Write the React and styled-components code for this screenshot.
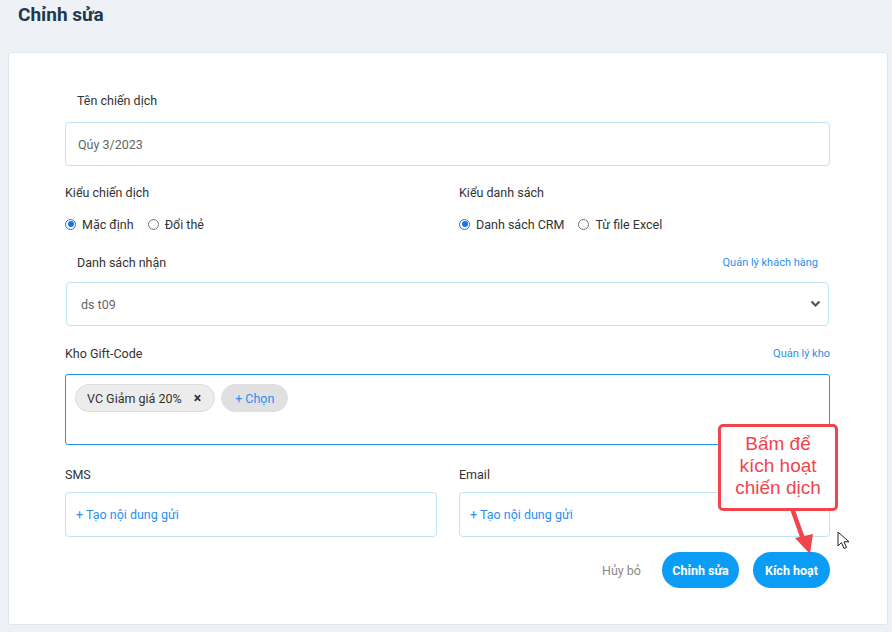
import React from "react";
import styled, { createGlobalStyle } from "styled-components";

const Global = createGlobalStyle`
  html, body { margin: 0; padding: 0; background: #eef2f6; }
  body { font-family: Roboto, "Noto Sans", Arial, sans-serif; color: #333; }
  * { box-sizing: border-box; }
`;

const Page = styled.div`
  padding: 0 4px 7px 8px;
  width: 892px;
`;

const Title = styled.h1`
  margin: 0;
  padding-left: 10px;
  height: 30px;
  line-height: 30px;
  font-size: 19px;
  font-weight: 700;
  color: #22384d;
`;

const Card = styled.div`
  position: relative;
  margin-top: 22px;
  background: #fff;
  border: 1px solid #e1e6ea;
  border-radius: 3px;
  padding: 40px 57px 35px 56px;
  height: 573px;
`;

const Label = styled.div`
  font-size: 12.5px;
  line-height: 16px;
  color: #333;
  padding-left: ${(p) => (p.$indent ? "12px" : "0")};
  margin-top: ${(p) => p.$mt || 0}px;
  margin-bottom: ${(p) => p.$mb || 0}px;
`;

const LabelRow = styled.div`
  display: flex;
  justify-content: space-between;
  align-items: center;
  margin-top: ${(p) => p.$mt || 0}px;
  margin-bottom: ${(p) => p.$mb || 0}px;
  padding-right: ${(p) => p.$pr || 0}px;
`;

const Link = styled.a`
  font-size: 11px;
  line-height: 16px;
  color: #2b8ff0;
  text-decoration: none;
`;

const Input = styled.div`
  height: 44px;
  border: 1px solid #bfe3fc;
  border-radius: 4px;
  display: flex;
  align-items: center;
  padding-left: 12px;
  font-size: 12.5px;
  color: #666;
`;

const Select = styled(Input)`
  margin: 0 1px;
  padding: 0 7px 0 14px;
  justify-content: space-between;
`;

const Columns = styled.div`
  display: grid;
  grid-template-columns: 372px 371px;
  column-gap: 22px;
  margin-top: ${(p) => p.$mt || 0}px;
`;

const RadioRow = styled.div`
  display: flex;
  align-items: center;
  gap: 14px;
  margin-top: 15px;
  height: 16px;
`;

const RadioItem = styled.label`
  display: flex;
  align-items: center;
  gap: 6px;
  font-size: 12.5px;
  color: #333;
`;

const RadioDot = styled.span`
  width: 11px;
  height: 11px;
  border-radius: 50%;
  border: ${(p) => (p.$on ? "1.5px solid #1a73e8" : "1px solid #767676")};
  display: inline-flex;
  align-items: center;
  justify-content: center;
  &::after {
    content: "";
    width: 6px;
    height: 6px;
    border-radius: 50%;
    background: ${(p) => (p.$on ? "#1a73e8" : "transparent")};
  }
`;

const GiftBox = styled.div`
  height: 71px;
  border: 1px solid #1f93e6;
  border-radius: 3px;
  padding: 9px 9px;
  display: flex;
  align-items: flex-start;
  gap: 6px;
`;

const Chip = styled.span`
  height: 28px;
  border-radius: 14px;
  display: inline-flex;
  align-items: center;
  font-size: 12.5px;
  padding: 0 ${(p) => (p.$add ? "13px" : "13px")} 0 ${(p) => (p.$add ? "13px" : "11px")};
  background: ${(p) => (p.$add ? "#e0e0e0" : "#ececec")};
  border: 1px solid ${(p) => (p.$add ? "#e0e0e0" : "#dcdcdc")};
  color: ${(p) => (p.$add ? "#2b8ff0" : "#333")};
`;

const ChipClose = styled.span`
  margin-left: 12px;
  font-size: 14px;
  font-weight: 700;
  color: #333;
  line-height: 1;
`;

const ContentBox = styled.div`
  height: 45px;
  border: 1px solid #bfe3fc;
  border-radius: 4px;
  display: flex;
  align-items: center;
  padding-left: 10px;
  font-size: 12.5px;
  color: #2b8ff0;
  margin-top: 9px;
`;

const Actions = styled.div`
  display: flex;
  justify-content: flex-end;
  align-items: center;
  margin-top: 15px;
  gap: 14px;
`;

const Cancel = styled.span`
  font-size: 12.5px;
  color: #888;
  margin-right: 7px;
`;

const Button = styled.button`
  height: 36px;
  width: 77px;
  border: none;
  border-radius: 18px;
  background: #0b9df6;
  color: #fff;
  font-family: Roboto, Arial, sans-serif;
  font-weight: 700;
  font-size: 12.5px;
  padding: 0;
`;

const Callout = styled.div`
  position: absolute;
  left: 709px;
  top: 371px;
  width: 120px;
  height: 87px;
  background: #fff;
  border: 3px solid #f0454d;
  border-radius: 5px;
  color: #f0454d;
  font-family: "Liberation Sans", Arial, sans-serif;
  font-size: 19px;
  line-height: 22px;
  text-align: center;
  padding-top: 6px;
  z-index: 2;
`;

const Overlay = styled.svg`
  position: absolute;
  left: ${(p) => p.$x}px;
  top: ${(p) => p.$y}px;
  z-index: 3;
  overflow: visible;
`;

const Chevron = () => (
  <svg width="11" height="8" viewBox="0 0 11 8">
    <path d="M1.5 1.5 L5.5 5.5 L9.5 1.5" fill="none" stroke="#555" strokeWidth="2.2" />
  </svg>
);

function Radio({ on, children }) {
  return (
    <RadioItem>
      <RadioDot $on={on} />
      {children}
    </RadioItem>
  );
}

export default function App() {
  return (
    <Page>
      <Global />
      <Title>Chỉnh sửa</Title>
      <Card>
        <Label $indent $mb={13}>Tên chiến dịch</Label>
        <Input>Qúy 3/2023</Input>

        <Columns $mt={19}>
          <div>
            <Label>Kiểu chiến dịch</Label>
            <RadioRow>
              <Radio on>Mặc định</Radio>
              <Radio>Đổi thẻ</Radio>
            </RadioRow>
          </div>
          <div>
            <Label>Kiểu danh sách</Label>
            <RadioRow>
              <Radio on>Danh sách CRM</Radio>
              <Radio>Từ file Excel</Radio>
            </RadioRow>
          </div>
        </Columns>

        <LabelRow $mt={23} $mb={11} $pr={12}>
          <Label $indent>Danh sách nhận</Label>
          <Link>Quản lý khách hàng</Link>
        </LabelRow>
        <Select>
          <span>ds t09</span>
          <Chevron />
        </Select>

        <LabelRow $mt={20} $mb={12}>
          <Label>Kho Gift-Code</Label>
          <Link>Quản lý kho</Link>
        </LabelRow>
        <GiftBox>
          <Chip>
            VC Giảm giá 20%
            <ChipClose>×</ChipClose>
          </Chip>
          <Chip $add>+ Chọn</Chip>
        </GiftBox>

        <Columns $mt={22}>
          <div>
            <Label>SMS</Label>
            <ContentBox>+ Tạo nội dung gửi</ContentBox>
          </div>
          <div>
            <Label>Email</Label>
            <ContentBox>+ Tạo nội dung gửi</ContentBox>
          </div>
        </Columns>

        <Actions>
          <Cancel>Hủy bỏ</Cancel>
          <Button>Chỉnh sửa</Button>
          <Button>Kích hoạt</Button>
        </Actions>

        <Callout>
          Bấm để
          <br />
          kích hoạt
          <br />
          chiến dịch
        </Callout>
        <Overlay $x={776} $y={456} width="30" height="50" viewBox="0 0 30 50">
          <path d="M8 2 L18 30" stroke="#f0454d" strokeWidth="4.5" strokeLinecap="round" />
          <path d="M10 29 L28 25 L25 45 Z" fill="#f0454d" />
        </Overlay>
        <Overlay $x={828} $y={478} width="14" height="20" viewBox="0 0 14 20">
          <path d="M1 1 L1 15 L4.5 11.5 L7 17.5 L9.5 16.5 L7 10.8 L12 10.8 Z" fill="#fff" stroke="#222" strokeWidth="1" strokeLinejoin="round" />
        </Overlay>
      </Card>
    </Page>
  );
}
